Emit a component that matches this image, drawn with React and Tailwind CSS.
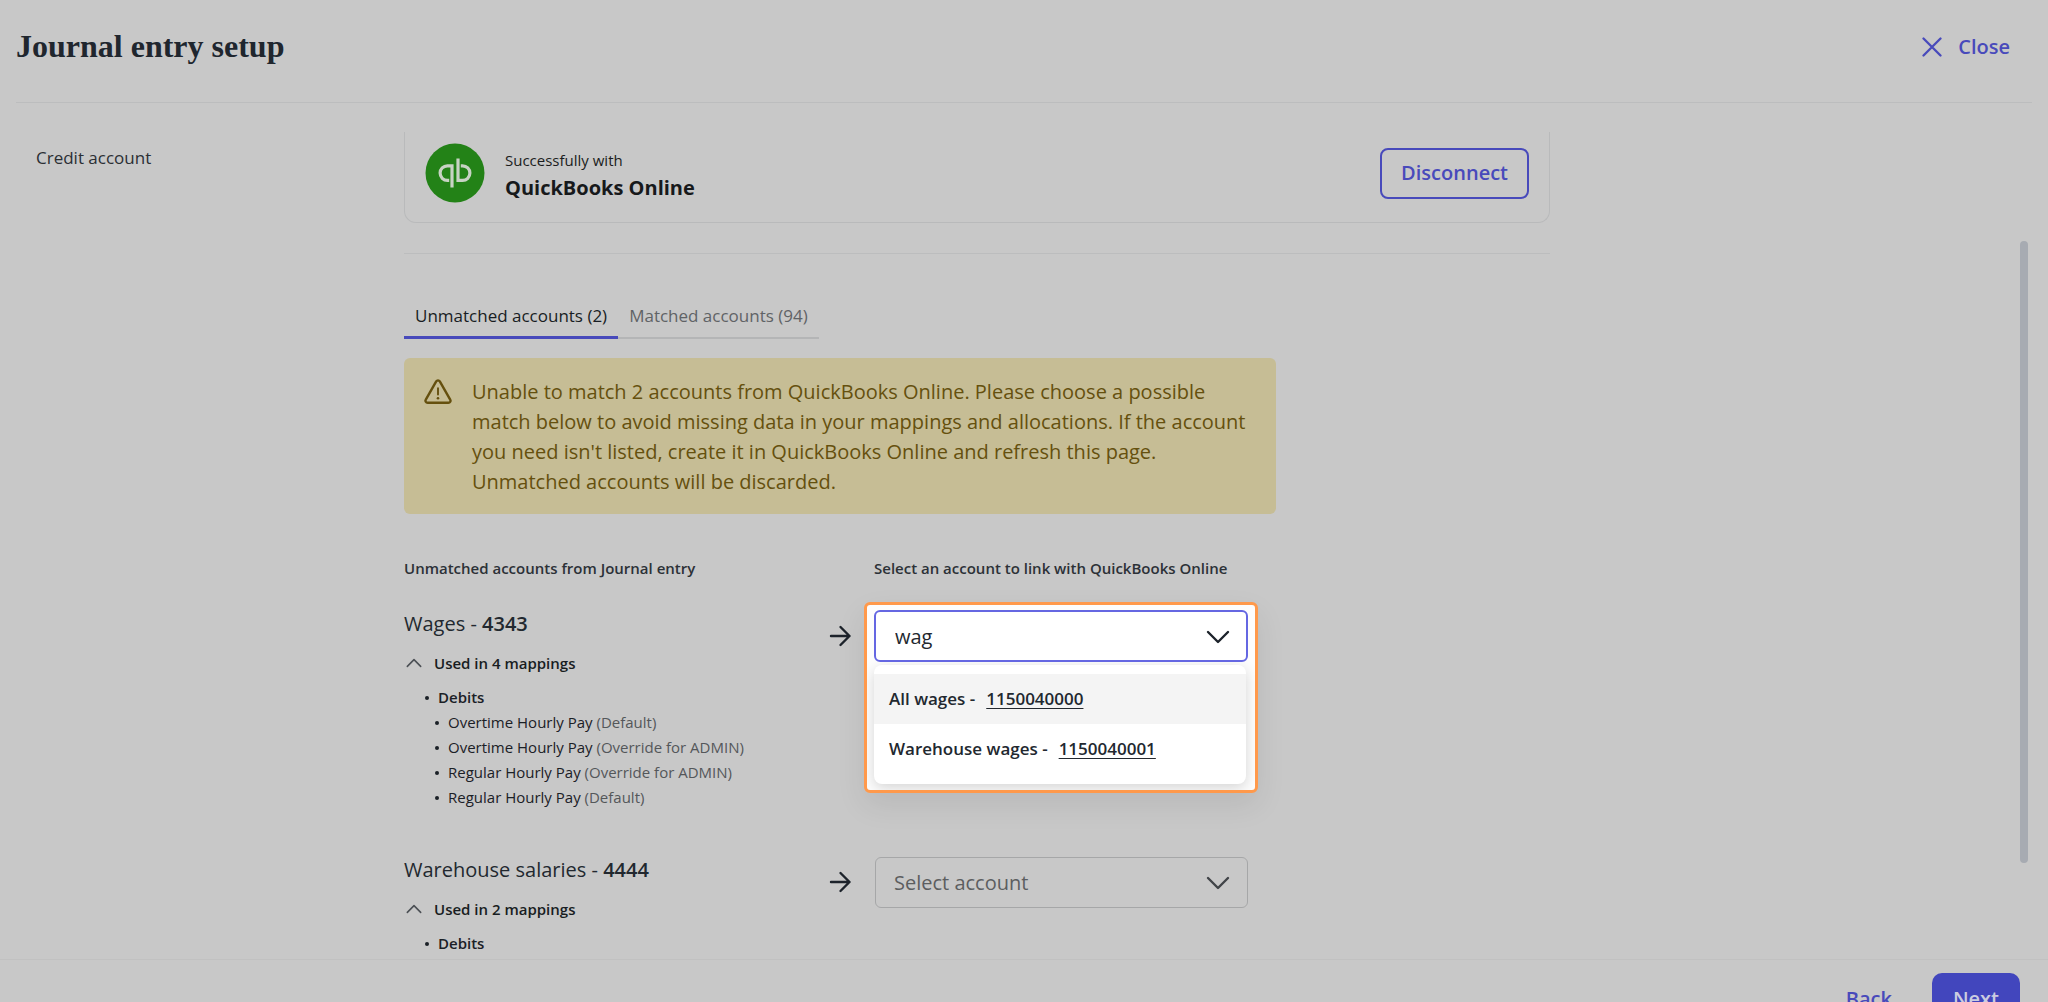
// src/App.jsx
import React, { useState } from "react";

const ACCOUNTS = [
  { name: "All wages", number: "1150040000" },
  { name: "Warehouse wages", number: "1150040001" },
];

const UNMATCHED = [
  {
    id: "wages",
    name: "Wages",
    code: "4343",
    count: 4,
    debits: [
      { label: "Overtime Hourly Pay", scope: "(Default)" },
      { label: "Overtime Hourly Pay", scope: "(Override for ADMIN)" },
      { label: "Regular Hourly Pay", scope: "(Override for ADMIN)" },
      { label: "Regular Hourly Pay", scope: "(Default)" },
    ],
  },
  { id: "salaries", name: "Warehouse salaries", code: "4444", count: 2, debits: [] },
];

function Chevron({ className }) {
  return (
    <svg viewBox="0 0 24 14" fill="none" className={className} aria-hidden="true">
      <path d="M2 2l10 10L22 2" stroke="currentColor" strokeWidth="2.4" strokeLinecap="round" strokeLinejoin="round" />
    </svg>
  );
}

function Arrow() {
  return (
    <svg viewBox="0 0 24 24" fill="none" className="mt-[14px] ml-px h-6 w-6 text-[#1d232b]" aria-hidden="true">
      <path d="M2 12h18.5M11.5 3l9 9-9 9" stroke="currentColor" strokeWidth="2.4" strokeLinecap="round" strokeLinejoin="round" />
    </svg>
  );
}

function QuickBooksLogo() {
  return (
    <svg viewBox="0 0 60 60" className="h-15 w-15 shrink-0" aria-hidden="true">
      <circle cx="30" cy="30" r="29.5" fill="#238217" />
      <g fill="none" stroke="#c8d3c4" strokeWidth="3.2">
        <path d="M27 44.5V22.8h-4.6a7.3 7.3 0 0 0 0 14.6h1.8" />
        <path d="M33 15.5v21.9h4.6a7.3 7.3 0 0 0 0-14.6h-1.8" />
      </g>
    </svg>
  );
}

function WarningIcon() {
  return (
    <svg viewBox="0 0 28 26" fill="none" className="mt-[2px] h-[26px] w-7 shrink-0" aria-hidden="true">
      <path
        d="M12.2 2.4L1.8 20.6a2.1 2.1 0 0 0 1.8 3.2h20.8a2.1 2.1 0 0 0 1.8-3.2L15.8 2.4a2.1 2.1 0 0 0-3.6 0z"
        stroke="currentColor"
        strokeWidth="2.4"
        strokeLinejoin="round"
      />
      <path d="M14 9.2v6.4" stroke="currentColor" strokeWidth="1.9" strokeLinecap="round" />
      <circle cx="14" cy="19.3" r="1.3" fill="currentColor" />
    </svg>
  );
}

function MappingDetails({ account }) {
  const [open, setOpen] = useState(true);

  return (
    <div className="w-[424px]">
      <p className="text-xl leading-7 text-[#22282f]">
        {account.name} - <span className="font-semibold">{account.code}</span>
      </p>
      <button
        onClick={() => setOpen(!open)}
        aria-expanded={open}
        className="mt-3 flex items-center gap-3 pl-[2px] text-[15px] leading-[26px] font-semibold text-[#181d22]"
      >
        <Chevron className="h-[10px] w-4 rotate-180 text-[#4c5055]" />
        Used in {account.count} mappings
      </button>
      {open && (
        <ul className="mt-[9px] pl-[21px] text-[15px] leading-[25px] text-[#1b2026]">
          <li>
            <p className="flex items-center gap-[9px] font-semibold">
              <span className="h-1 w-1 rounded-full bg-current" />
              Debits
            </p>
            <ul className="pl-[10px]">
              {account.debits.map((d) => (
                <li key={d.label + d.scope} className="flex items-center gap-[9px]">
                  <span className="h-1 w-1 rounded-full bg-current" />
                  <span>
                    {d.label} <span className="text-[#54575a]">{d.scope}</span>
                  </span>
                </li>
              ))}
            </ul>
          </li>
        </ul>
      )}
    </div>
  );
}

function AccountSearch() {
  const [query, setQuery] = useState("wag");
  const results = ACCOUNTS.filter((a) => a.name.toLowerCase().includes(query.toLowerCase()));

  return (
    <div className="relative h-[50px] w-[373px]">
      {/* Highlighted panel that sits above the dimmed page */}
      <div className="absolute -top-2 -left-[11px] z-10 w-[394px] rounded-md border-3 border-[#ff994b] bg-[#fdfdfd] shadow-[0_12px_30px_rgba(0,0,0,0.08)]">
        <div className="overflow-hidden px-[7px] pt-[5px] pb-[6px]">
          <div className="relative">
            <input
              type="text"
              role="combobox"
              aria-expanded="true"
              aria-controls="account-list"
              aria-label="Account for Wages"
              value={query}
              onChange={(e) => setQuery(e.target.value)}
              className="h-[52px] w-full rounded-md border-2 border-[#6567e2] bg-white px-[19px] text-xl text-[#22282f] outline-none"
            />
            <Chevron className="pointer-events-none absolute top-5 right-[18px] h-[14px] w-6 text-[#1d232b]" />
          </div>
          <ul
            id="account-list"
            role="listbox"
            aria-label="Accounts"
            className="mt-[3px] mr-[2px] rounded-lg bg-white pt-[9px] pb-[10px] shadow-[0_4px_14px_rgba(0,0,0,0.16)]"
          >
            {results.map((a, i) => (
              <li
                key={a.number}
                role="option"
                aria-selected={i === 0}
                className={`flex h-[50px] items-center gap-[11px] px-[15px] text-[17px] font-semibold text-[#22282f] ${
                  i === 0 ? "bg-[#f4f4f4]" : "bg-white"
                }`}
              >
                <span>{a.name} -</span>
                <span className="underline underline-offset-3">{a.number}</span>
              </li>
            ))}
          </ul>
        </div>
      </div>
    </div>
  );
}

function AccountSelect() {
  return (
    <div className="relative w-[373px]">
      <select
        aria-label="Account for Warehouse salaries"
        className="mt-px h-[51px] w-full appearance-none rounded-md border border-[#a6a7a8] bg-transparent px-[18px] text-xl text-[#5c5e60]"
      >
        <option>Select account</option>
        {ACCOUNTS.map((a) => (
          <option key={a.number}>{a.name}</option>
        ))}
      </select>
      <Chevron className="pointer-events-none absolute top-5 right-[18px] h-[14px] w-6 text-[#414448]" />
    </div>
  );
}

export default function App() {
  return (
    <div className="flex h-screen flex-col overflow-hidden bg-[#c8c8c8] font-['Open_Sans',sans-serif] text-[#22282f]">
      <header className="mx-4 flex h-[103px] shrink-0 items-start justify-between border-b border-[#bcbdbe] pt-[27px] pr-[22px]">
        <h1 className="font-['Liberation_Serif',serif] text-[32px] leading-[38px] font-bold text-[#20262e]">
          Journal entry setup
        </h1>
        <button className="flex items-center gap-4 text-xl leading-[40px] font-semibold text-[#484abb]">
          <svg viewBox="0 0 20 20" className="h-5 w-5" fill="none" aria-hidden="true">
            <path d="M1.5 1.5l17 17M18.5 1.5l-17 17" stroke="currentColor" strokeWidth="2.3" strokeLinecap="round" />
          </svg>
          Close
        </button>
      </header>

      <div className="mt-[29px] flex min-h-0 flex-1 overflow-hidden">
        <nav className="w-[404px] shrink-0 pt-[14px] pl-9">
          <a href="#credit" className="text-[17px] leading-6 text-[#2b2f34]">
            Credit account
          </a>
        </nav>

        <main className="w-[1146px] shrink-0">
          <section className="flex h-[91px] items-center justify-between rounded-b-xl border border-t-0 border-[#b9babb] px-5 pb-2">
            <div className="flex items-center gap-5">
              <QuickBooksLogo />
              <div className="pt-1">
                <p className="text-[15px] leading-[26px] font-medium text-[#1b1d20]">Successfully with</p>
                <p className="text-xl leading-[30px] font-bold text-[#17191b]">QuickBooks Online</p>
              </div>
            </div>
            <button className="h-[51px] rounded-lg border-2 border-[#484abb] px-[19px] text-xl font-semibold text-[#484abb]">
              Disconnect
            </button>
          </section>

          <hr className="mt-[30px] border-[#bcbdbe]" />

          <div role="tablist" className="mt-[49px] flex text-[17px]">
            <button
              role="tab"
              aria-selected="true"
              className="h-9 border-b-3 border-[#484abb] px-[11px] pb-2 leading-[26px] text-[#181d23]"
            >
              Unmatched accounts (2)
            </button>
            <button
              role="tab"
              aria-selected="false"
              className="h-9 border-b-2 border-[#b4b5b6] px-[11px] pb-2 leading-[26px] text-[#606366]"
            >
              Matched accounts (94)
            </button>
          </div>

          <div role="alert" className="mt-[19px] flex w-[872px] gap-5 rounded-md bg-[#c6bd95] pt-[19px] pr-4 pb-[17px] pl-5 text-[#65500e]">
            <WarningIcon />
            <p className="text-xl leading-[30px]">
              Unable to match 2 accounts from QuickBooks Online. Please choose a possible match below to avoid missing
              data in your mappings and allocations. If the account you need isn't listed, create it in QuickBooks
              Online and refresh this page. Unmatched accounts will be discarded.
            </p>
          </div>

          <div className="mt-[42px] flex text-[15px] leading-6 font-semibold text-[#2c3137]">
            <h2 className="w-[470px]">Unmatched accounts from Journal entry</h2>
            <h2>Select an account to link with QuickBooks Online</h2>
          </div>

          <div className="mt-[30px] flex h-[246px]">
            <MappingDetails account={UNMATCHED[0]} />
            <div className="w-[47px]">
              <Arrow />
            </div>
            <AccountSearch />
          </div>
          <div className="flex">
            <MappingDetails account={UNMATCHED[1]} />
            <div className="w-[47px]">
              <Arrow />
            </div>
            <AccountSelect />
          </div>
        </main>

        {/* Scrollbar thumb */}
        <div className="mt-[109px] mr-5 ml-auto h-[622px] w-2 shrink-0 rounded-full bg-[#a7abb2]" />
      </div>

      <footer className="flex h-[43px] shrink-0 items-start justify-end gap-10 overflow-hidden border-t border-[#c1c1c1] pt-[13px] pr-7 text-xl font-semibold">
        <button className="h-[52px] text-[#484abb]">Back</button>
        <button className="h-[52px] rounded-[10px] bg-[#4246bd] px-[21px] text-[#cbcce0]">Next</button>
      </footer>
    </div>
  );
}
